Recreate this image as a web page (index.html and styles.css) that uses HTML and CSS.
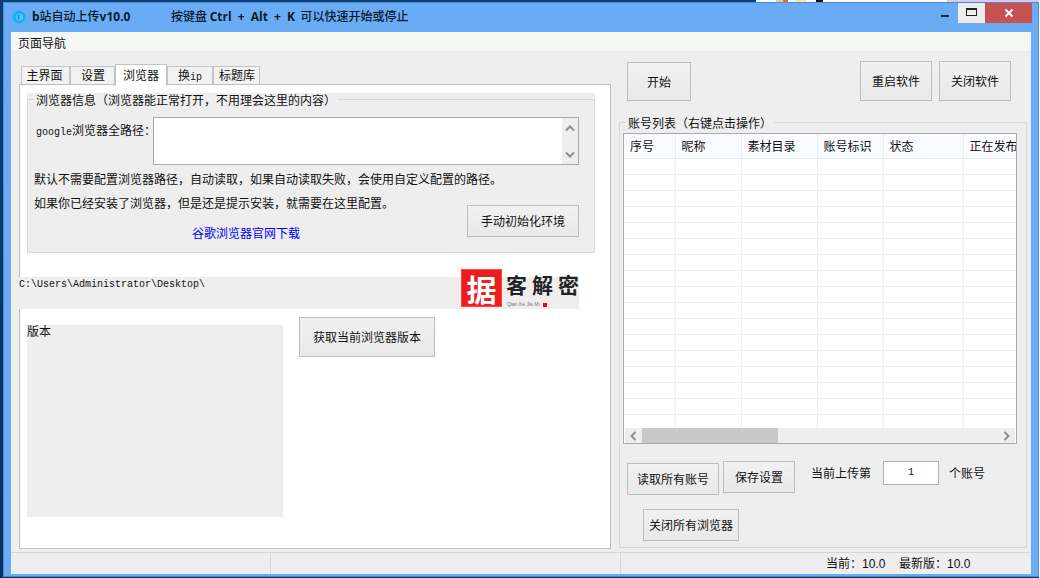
FILE: index.html
```html
<!DOCTYPE html>
<html lang="zh-CN">
<head>
<meta charset="utf-8">
<title>b站自动上传v10.0</title>
<link rel="stylesheet" href="styles.css">
</head>
<body>
<div class="desktop">
  <div class="desk-top"></div>
  <div class="desk-right"></div>
  <div class="window">
    <header class="titlebar">
      <svg class="app-icon" width="16" height="14" viewBox="0 0 16 14"><circle cx="7" cy="7" r="6.500" fill="#0fb6f6"/><circle cx="7.500" cy="7" r="3.300" fill="#7cc4f8"/><path d="M6.300 4.800v4.400M6.300 7l2.200-2.200M6.300 7l2.200 2.200" stroke="#0d6fd0" stroke-width="1" fill="none"/><path d="M11 11h4" stroke="#2fc0f6" stroke-width="1"/></svg>
      <span class="app-name"><b>b</b>站自动上传<b>v10.0</b></span>
      <span class="hotkey">按键盘 <b>Ctrl + Alt + K</b> &nbsp;可以快速开始或停止</span>
      <div class="win-controls">
        <span class="win-min"><i></i></span>
        <span class="win-max"><i></i></span>
        <span class="win-close"><svg width="10" height="10" viewBox="0 0 10 10"><path d="M1.500 1.500l7 7M8.500 1.500l-7 7" stroke="#fff" stroke-width="2"/></svg></span>
      </div>
    </header>

    <div class="client">
      <nav class="menubar">页面导航</nav>
      <main class="main">
        <section class="left">
          <div class="tabs">
            <span class="tab tab-a">主界面</span>
            <span class="tab tab-b">设置</span>
            <span class="tab tab-c active">浏览器</span>
            <span class="tab tab-d">换<span class="mono">ip</span></span>
            <span class="tab tab-e">标题库</span>
          </div>
          <div class="panel">
            <div class="group-bg">
              <fieldset class="group">
                <legend>浏览器信息（浏览器能正常打开，不用理会这里的内容）</legend>
                <div class="path-row">
                  <label class="path-label"><span class="mono">google</span>浏览器全路径：</label>
                  <div class="path-box">
                    <div class="vscroll">
                      <svg width="10" height="7" viewBox="0 0 10 7"><path d="M1 5.500l4-4 4 4" stroke="#8f8f8f" stroke-width="2" fill="none"/></svg>
                      <svg width="10" height="7" viewBox="0 0 10 7"><path d="M1 1.500l4 4 4-4" stroke="#8f8f8f" stroke-width="2" fill="none"/></svg>
                    </div>
                  </div>
                </div>
                <p class="note">默认不需要配置浏览器路径，自动读取，如果自动读取失败，会使用自定义配置的路径。</p>
                <p class="note">如果你已经安装了浏览器，但是还是提示安装，就需要在这里配置。</p>
                <div class="link-row">
                  <a class="link">谷歌浏览器官网下载</a>
                  <button class="btn btn-init">手动初始化环境</button>
                </div>
              </fieldset>
            </div>

            <div class="strip">
              <span class="mono desktop-path">C:\Users\Administrator\Desktop\</span>
              <div class="logo">
                <div class="stamp"><span>据</span></div>
                <div class="logo-text">
                  <div class="logo-cn">客解密</div>
                  <div class="logo-en">Qian Ke Jie Mi<i></i></div>
                </div>
              </div>
            </div>

            <div class="version-row">
              <div class="version-box">版本</div>
              <button class="btn btn-version">获取当前浏览器版本</button>
            </div>
          </div>
        </section>

        <section class="right">
          <div class="top-actions">
            <button class="btn btn-start">开始</button>
            <button class="btn btn-soft push">重启软件</button>
            <button class="btn btn-soft">关闭软件</button>
          </div>
          <fieldset class="accounts">
            <legend>账号列表（右键点击操作）</legend>
            <div class="table-wrap">
              <div class="table-clip">
                <table class="grid">
                  <thead>
                    <tr><th class="c1">序号</th><th class="c2">昵称</th><th class="c3">素材目录</th><th class="c4">账号标识</th><th class="c5">状态</th><th class="c6">正在发布</th></tr>
                  </thead>
                  <tbody>
                    <tr><td></td><td></td><td></td><td></td><td></td><td></td></tr>
                    <tr><td></td><td></td><td></td><td></td><td></td><td></td></tr>
                    <tr><td></td><td></td><td></td><td></td><td></td><td></td></tr>
                    <tr><td></td><td></td><td></td><td></td><td></td><td></td></tr>
                    <tr><td></td><td></td><td></td><td></td><td></td><td></td></tr>
                    <tr><td></td><td></td><td></td><td></td><td></td><td></td></tr>
                    <tr><td></td><td></td><td></td><td></td><td></td><td></td></tr>
                    <tr><td></td><td></td><td></td><td></td><td></td><td></td></tr>
                    <tr><td></td><td></td><td></td><td></td><td></td><td></td></tr>
                    <tr><td></td><td></td><td></td><td></td><td></td><td></td></tr>
                    <tr><td></td><td></td><td></td><td></td><td></td><td></td></tr>
                    <tr><td></td><td></td><td></td><td></td><td></td><td></td></tr>
                    <tr><td></td><td></td><td></td><td></td><td></td><td></td></tr>
                    <tr><td></td><td></td><td></td><td></td><td></td><td></td></tr>
                    <tr><td></td><td></td><td></td><td></td><td></td><td></td></tr>
                    <tr><td></td><td></td><td></td><td></td><td></td><td></td></tr>
                    <tr><td></td><td></td><td></td><td></td><td></td><td></td></tr>
                  </tbody>
                </table>
              </div>
              <div class="hscroll">
                <svg class="arrow-l" width="7" height="10" viewBox="0 0 7 10"><path d="M5.500 1l-4 4 4 4" stroke="#8f8f8f" stroke-width="2" fill="none"/></svg>
                <div class="thumb"></div>
                <svg class="arrow-r" width="7" height="10" viewBox="0 0 7 10"><path d="M1.500 1l4 4-4 4" stroke="#8f8f8f" stroke-width="2" fill="none"/></svg>
              </div>
            </div>
            <div class="acct-row">
              <button class="btn btn-read">读取所有账号</button>
              <button class="btn btn-save">保存设置</button>
              <span class="lbl lbl-a">当前上传第</span>
              <div class="num-input mono">1</div>
              <span class="lbl lbl-b">个账号</span>
            </div>
            <button class="btn btn-closeall">关闭所有浏览器</button>
          </fieldset>
        </section>
      </main>
      <footer class="statusbar">
        <div class="st st-a"></div>
        <div class="st st-b"></div>
        <div class="st st-c">当前：10.0 &nbsp; 最新版：10.0</div>
      </footer>
    </div>
  </div>
</div>
</body>
</html>
```

FILE: styles.css
```css
* { box-sizing: border-box; }
html, body { margin: 0; padding: 0; }
body {
  font: 12px/14px "Noto Sans CJK SC", "Liberation Sans", sans-serif;
  color: #111;
}
.mono { font-family: "Liberation Mono", "Noto Sans CJK SC", monospace; font-size: 10px; }

.desktop {
  position: relative;
  width: 1040px;
  height: 578px;
  overflow: hidden;
  background: linear-gradient(180deg, #0a3f75 0%, #06305c 100%);
}
.desk-top {
  position: absolute;
  left: 756px; top: 0;
  width: 284px; height: 3px;
  background: linear-gradient(90deg,
    #fff 0 20px, #e6c9a8 20px 27px, #e7703a 27px 32px, #fff 32px 39px,
    #fbe6a0 39px 50px, #fff 50px 60px, #111 60px 67px, #fff 67px 191px,
    #dcc8f0 191px 100%);
}
.desk-right {
  position: absolute;
  left: 1039px; top: 0;
  width: 1px; height: 578px;
  background: #fff;
}
.window {
  position: absolute;
  left: 3px; top: 2px;
  width: 1036px; height: 575px;
  padding: 0 7px 2px;
  background: #69acf5;
  border: 1px solid #4c8bd0;
  display: flex;
  flex-direction: column;
}
.titlebar {
  height: 29px;
  margin: 0 -7px;
  padding: 0 6px 0 8px;
  display: flex;
  align-items: flex-start;
  flex: none;
}
.app-icon { margin-top: 7px; flex: none; }
.app-name { margin-left: 4px; width: 139px; line-height: 26px; color: #0c1a2a; font-weight: 500; }
.hotkey { line-height: 26px; color: #0c1a2a; font-weight: 500; }
.titlebar b { font-family: "Open Sans", "Noto Sans", sans-serif; font-weight: 700; font-size: 12px; }
.hotkey b { word-spacing: 3px; }
.win-controls { margin-left: auto; display: flex; height: 20px; }
.win-min { width: 27px; height: 20px; position: relative; margin-right: -1px; }
.win-min i { position: absolute; left: 9px; top: 12px; width: 8px; height: 2px; background: #222; }
.win-max { width: 27px; height: 20px; background: #ededed; position: relative; }
.win-max i { position: absolute; left: 8px; top: 5px; width: 11px; height: 8px; border: 1px solid #222; border-top-width: 2px; }
.win-close { width: 47px; height: 20px; background: #c75050; display: flex; align-items: center; justify-content: center; }

.client {
  flex: 1;
  display: flex;
  flex-direction: column;
  background: #eeeeee;
  min-height: 0;
}
.menubar {
  height: 20px;
  flex: none;
  padding: 4px 0 0 7px;
  background: #f5f7f5;
  border-bottom: 1px solid #ebebeb;
}
.main { height: 500px; flex: none; display: flex; }

.left { width: 600px; flex: none; padding: 12px 0 0 8px; }
.tabs { height: 20px; padding-left: 2px; display: flex; align-items: flex-start; position: relative; z-index: 1; }
.tab {
  height: 18px;
  margin-top: 2px;
  border: 1px solid #c4c4c4;
  border-bottom: 0;
  background: #f2f2f2;
  text-align: center;
  line-height: 15px;
  flex: none;
}
.tab-a { width: 49px; padding-right: 2px; }
.tab-b { width: 45px; padding-left: 1px; }
.tab-c { width: 52px; }
.tab-d { width: 46px; }
.tab-e { width: 47px; padding-left: 1px; }
.tab.active { height: 22px; margin-top: 0; background: #fff; line-height: 19px; position: relative; }

.panel {
  width: 592px;
  height: 465px;
  background: #fff;
  border: 1px solid #c0c0c0;
  padding: 8px 0 0 7px;
}
.group-bg { width: 568px; height: 160px; background: #eeeeee; }
.group {
  margin: 0;
  padding: 0 0 0 7px;
  height: 160px;
  border: 1px solid #d8d8d8;
  min-width: 0;
}
legend { padding: 0 2px; margin-left: -1px; line-height: 13px; }
.path-row { display: flex; padding-top: 11px; }
.path-label { width: 118px; flex: none; line-height: 26px; padding-left: 1px; white-space: nowrap; }
.path-box {
  width: 426px;
  height: 48px;
  background: #fff;
  border: 1px solid #a8a8a8;
  display: flex;
  justify-content: flex-end;
}
.vscroll {
  width: 16px;
  background: #eeeeee;
  display: flex;
  flex-direction: column;
  justify-content: space-between;
  align-items: center;
  padding: 7px 0 6px;
}
.note { margin: 0 0 0 -1px; line-height: 24px; white-space: nowrap; }
.note:first-of-type { margin-top: 2px; }
.link-row { display: flex; align-items: flex-start; height: 32px; margin-top: -10px; }
.link { color: #0000ff; margin: 20px 0 0 157px; line-height: 16px; }
.btn {
  font: inherit;
  color: #111;
  padding: 0;
  border: 1px solid #bdbdbd;
  background: linear-gradient(180deg, #f1f1f1, #e9e9e9);
  display: block;
  flex: none;
}
.btn-init { width: 112px; height: 32px; margin-left: 167px; }

.strip {
  width: 568px;
  height: 32px;
  margin: 24px 0 0 -16px;
  padding-left: 8px;
  background: #eeeeee;
  display: flex;
  justify-content: space-between;
  align-items: flex-start;
  position: relative;
}
.desktop-path { line-height: 14px; padding-top: 1px; }
.logo { display: flex; height: 39px; margin-top: -8px; width: 119px; }
.stamp {
  width: 41px; height: 38px;
  background: #ee1c1c;
  border: 1px solid #f44;
  color: #fff;
  font-size: 30px;
  font-weight: 700;
  line-height: 36px;
  text-align: center;
  flex: none;
  margin-left: 1px;
}
.stamp span { display: block; }
.logo-text { margin-left: 4px; }
.logo-cn {
  font-weight: 700;
  font-size: 21px;
  line-height: 24px;
  letter-spacing: 5px;
  color: #232323;
  white-space: nowrap;
  margin-top: 3px;
}
.logo-en {
  font-family: "Liberation Sans", sans-serif;
  font-size: 5px;
  line-height: 8px;
  color: #777;
  margin-top: 4px;
  margin-left: 1px;
  white-space: nowrap;
}
.logo-en i { display: inline-block; width: 4px; height: 4px; background: #f00; margin-left: 3px; vertical-align: middle; }

.version-row { display: flex; gap: 16px; margin-top: 8px; align-items: flex-start; }
.version-box { width: 256px; height: 192px; margin-top: 8px; background: #eeeeee; line-height: 12px; }
.btn-version { width: 136px; height: 40px; }

.right { flex: 1; min-width: 0; }
.top-actions { display: flex; gap: 7px; padding: 9px 20px 0 16px; height: 49px; align-items: flex-start; }
.btn-start { width: 64px; height: 39px; margin-top: 1px; }
.btn-soft { width: 72px; height: 40px; }
.push { margin-left: auto; }
.accounts {
  margin: 15px 4px 0 8px;
  padding: 4px 0 0 3px;
  width: 408px;
  height: 432px;
  border: 1px solid #d8d8d8;
  min-width: 0;
}
.accounts legend { margin-left: 3px; }
.table-wrap {
  width: 394px;
  height: 311px;
  border: 1px solid #a9a9b0;
  background: #fff;
  display: flex;
  flex-direction: column;
}
.table-clip { height: 294px; overflow: hidden; flex: none; }
.grid { border-collapse: collapse; table-layout: fixed; width: 401px; }
.grid th {
  height: 24px;
  padding: 0 0 0 6px;
  font-weight: 400;
  text-align: left;
  background: #fafbfe;
  border-right: 1px solid #e5eef8;
  border-bottom: 1px solid #e5eef8;
  white-space: nowrap;
  overflow: hidden;
}
.grid td { height: 16px; padding: 0; border-right: 1px solid #efefef; border-bottom: 1px solid #efefef; }
.c1 { width: 51px; }
.c2 { width: 66px; }
.c3 { width: 76px; }
.c4 { width: 66px; }
.c5 { width: 80px; }
.c6 { width: 62px; }
.hscroll {
  height: 15px;
  margin: 0 1px;
  background: #eeeeee;
  position: relative;
}
.thumb { position: absolute; left: 17px; top: 0; width: 136px; height: 15px; background: #c8c8c8; }
.arrow-l { position: absolute; left: 5px; top: 3px; }
.arrow-r { position: absolute; right: 5px; top: 3px; }

.acct-row { display: flex; align-items: flex-start; margin: 17px 0 0 4px; height: 34px; }
.btn-read { width: 92px; height: 32px; margin-top: 2px; }
.btn-save { width: 72px; height: 32px; margin-left: 4px; }
.lbl { line-height: 24px; white-space: nowrap; }
.lbl-a { margin-left: 16px; }
.num-input {
  width: 56px; height: 24px;
  margin-left: 12px;
  background: #fff;
  border: 1px solid #b0b0b0;
  text-align: center;
  line-height: 22px;
}
.lbl-b { margin-left: 10px; }
.btn-closeall { width: 96px; height: 32px; margin: 14px 0 0 20px; }

.statusbar { height: 22px; flex: none; display: flex; border-top: 1px solid #d6d6d6; }
.st { height: 21px; }
.st-a { width: 260px; border-right: 1px solid #d8d8d8; }
.st-b { width: 350px; border-right: 1px solid #d8d8d8; }
.st-c { padding: 3px 0 0 205px; font-family: "Liberation Sans", "Noto Sans CJK SC", sans-serif; line-height: 17px; white-space: nowrap; word-spacing: 1.200px; }
```
